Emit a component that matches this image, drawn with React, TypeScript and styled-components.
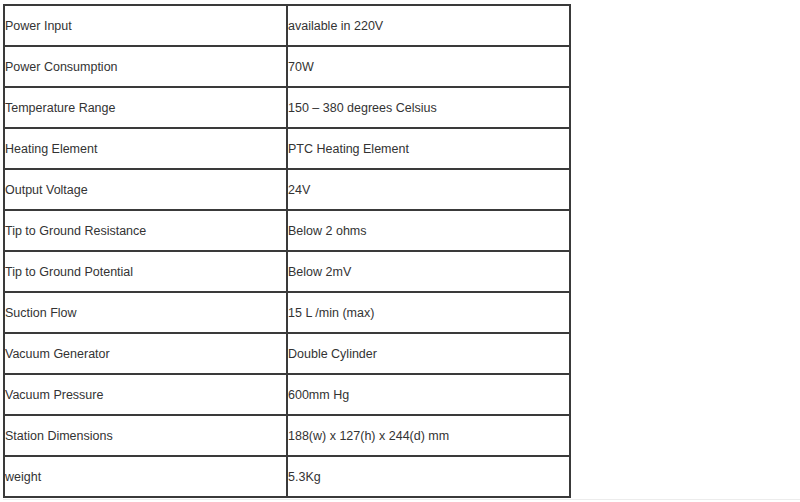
import React from "react";
import styled, { createGlobalStyle } from "styled-components";

const Global = createGlobalStyle`
  html, body { margin: 0; padding: 0; background: #ffffff; }
  body { font-family: "Liberation Sans", Arial, sans-serif; }
`;

const Page = styled.div`
  padding: 4px 0 0 3px;
  width: 800px;
  box-sizing: border-box;
`;

const Divider = styled.div`
  margin-top: 1px;
  height: 1px;
  background: #ececec;
`;

const Table = styled.table`
  border-collapse: collapse;
  width: 568px;
  border: 2px solid #4a4a4a;
`;

const Row = styled.tr`
  height: 41px;
`;

const Cell = styled.td`
  border: 2px solid #3a3a3a;
  padding: 1px 0 0 0;
  width: 50%;
  font-size: 12.5px;
  color: #333333;
  vertical-align: middle;
  line-height: 15px;
`;

const rows: [string, string][] = [
  ["Power Input", "available in 220V"],
  ["Power Consumption", "70W"],
  ["Temperature Range", "150 – 380 degrees Celsius"],
  ["Heating Element", "PTC Heating Element"],
  ["Output Voltage", "24V"],
  ["Tip to Ground Resistance", "Below 2 ohms"],
  ["Tip to Ground Potential", "Below 2mV"],
  ["Suction Flow", "15 L /min (max)"],
  ["Vacuum Generator", "Double Cylinder"],
  ["Vacuum Pressure", "600mm Hg"],
  ["Station Dimensions", "188(w) x 127(h) x 244(d) mm"],
  ["weight", "5.3Kg"],
];

export default function App() {
  return (
    <Page>
      <Global />
      <Table>
        <tbody>
          {rows.map(([k, v]) => (
            <Row key={k}>
              <Cell>{k}</Cell>
              <Cell>{v}</Cell>
            </Row>
          ))}
        </tbody>
      </Table>
      <Divider />
    </Page>
  );
}
